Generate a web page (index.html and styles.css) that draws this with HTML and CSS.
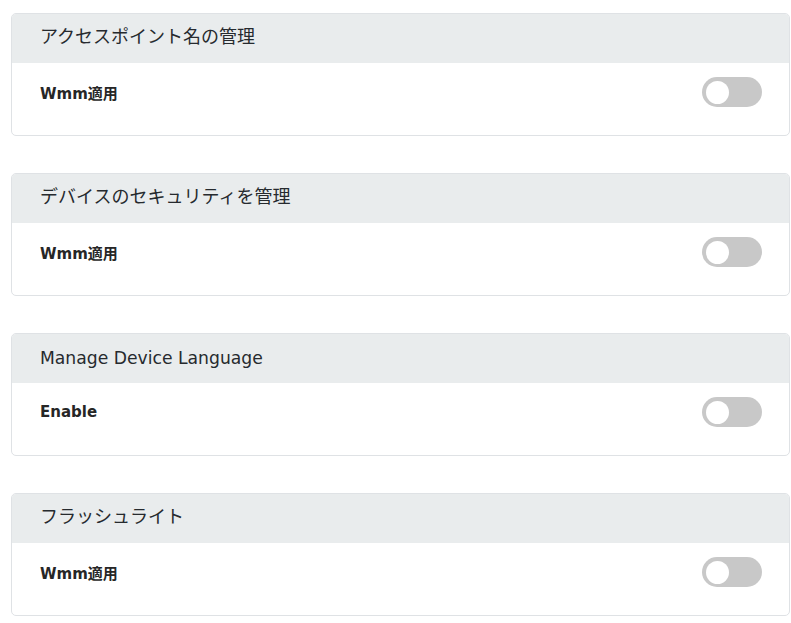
FILE: index.html
```html
<!DOCTYPE html>
<html lang="ja">
<head>
<meta charset="utf-8">
<title>Settings</title>
<link rel="stylesheet" href="styles.css">
</head>
<body>
<main class="list">
  <section class="card">
    <div class="card-header">アクセスポイント名の管理</div>
    <div class="card-body">
      <span class="label">Wmm適用</span>
      <span class="toggle"><span class="knob"></span></span>
    </div>
  </section>
  <section class="card">
    <div class="card-header">デバイスのセキュリティを管理</div>
    <div class="card-body">
      <span class="label">Wmm適用</span>
      <span class="toggle"><span class="knob"></span></span>
    </div>
  </section>
  <section class="card">
    <div class="card-header card-header-latin">Manage Device Language</div>
    <div class="card-body">
      <span class="label">Enable</span>
      <span class="toggle"><span class="knob"></span></span>
    </div>
  </section>
  <section class="card">
    <div class="card-header">フラッシュライト</div>
    <div class="card-body">
      <span class="label">Wmm適用</span>
      <span class="toggle"><span class="knob"></span></span>
    </div>
  </section>
</main>
</body>
</html>
```
FILE: styles.css
```css
html, body {
  margin: 0;
  background: #ffffff;
}
body {
  font-family: "DejaVu Sans", "Noto Sans CJK JP", sans-serif;
  color: #212529;
}
.list {
  display: flex;
  flex-direction: column;
  gap: 37px;
  padding: 13px 1px 0 11px;
}
.card {
  border: 1px solid #dfe2e5;
  border-radius: 5px;
  overflow: hidden;
  background: #ffffff;
}
.card-header {
  height: 49px;
  box-sizing: border-box;
  display: flex;
  align-items: center;
  padding: 0 28px 3px;
  background: #e9eced;
  font-size: 18px;
  line-height: 1.2;
  font-weight: 400;
  color: #262a2e;
}
.card-header-latin {
  font-size: 17.2px;
  padding-bottom: 1px;
}
.card-body {
  display: flex;
  align-items: center;
  justify-content: space-between;
  padding: 14px 27px 28px 28px;
}
.label {
  font-size: 15px;
  font-weight: 700;
  color: #262626;
}
.toggle {
  width: 60px;
  height: 30px;
  border-radius: 15px;
  background: #c8c8c8;
  display: flex;
  align-items: center;
  padding: 0 4px;
  box-sizing: border-box;
}
.knob {
  width: 23px;
  height: 23px;
  border-radius: 50%;
  background: #ffffff;
}
```
